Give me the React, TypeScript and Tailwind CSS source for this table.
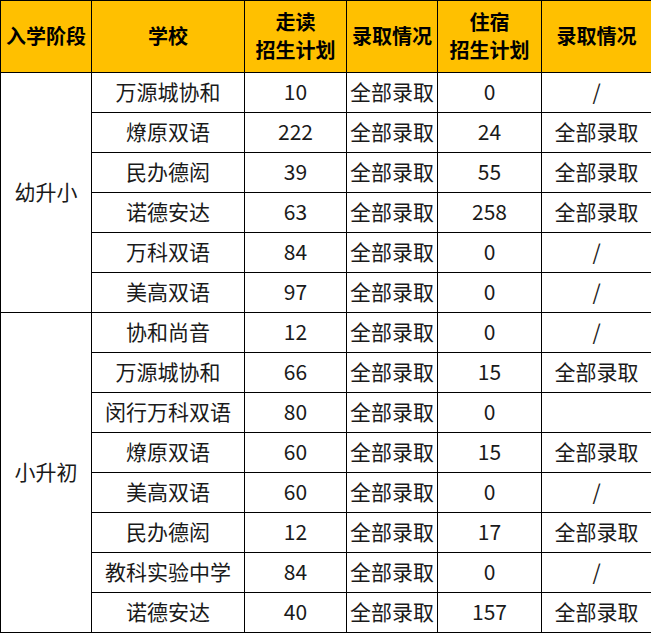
import React from 'react'

type Row = { school: string; walk: string; walkRes: string; board: string; boardRes: string }

const groups: { stage: string; rows: Row[] }[] = [
  {
    stage: '幼升小',
    rows: [
      { school: '万源城协和', walk: '10', walkRes: '全部录取', board: '0', boardRes: '/' },
      { school: '燎原双语', walk: '222', walkRes: '全部录取', board: '24', boardRes: '全部录取' },
      { school: '民办德闳', walk: '39', walkRes: '全部录取', board: '55', boardRes: '全部录取' },
      { school: '诺德安达', walk: '63', walkRes: '全部录取', board: '258', boardRes: '全部录取' },
      { school: '万科双语', walk: '84', walkRes: '全部录取', board: '0', boardRes: '/' },
      { school: '美高双语', walk: '97', walkRes: '全部录取', board: '0', boardRes: '/' },
    ],
  },
  {
    stage: '小升初',
    rows: [
      { school: '协和尚音', walk: '12', walkRes: '全部录取', board: '0', boardRes: '/' },
      { school: '万源城协和', walk: '66', walkRes: '全部录取', board: '15', boardRes: '全部录取' },
      { school: '闵行万科双语', walk: '80', walkRes: '全部录取', board: '0', boardRes: '' },
      { school: '燎原双语', walk: '60', walkRes: '全部录取', board: '15', boardRes: '全部录取' },
      { school: '美高双语', walk: '60', walkRes: '全部录取', board: '0', boardRes: '/' },
      { school: '民办德闳', walk: '12', walkRes: '全部录取', board: '17', boardRes: '全部录取' },
      { school: '教科实验中学', walk: '84', walkRes: '全部录取', board: '0', boardRes: '/' },
      { school: '诺德安达', walk: '40', walkRes: '全部录取', board: '157', boardRes: '全部录取' },
    ],
  },
]

const th = 'border border-black bg-[#ffc000] font-bold text-black text-center align-middle p-0 pb-[2px] text-[20px] leading-[28px]'
const td = 'border border-black text-center align-middle p-0 pb-[3px] text-[21px] leading-[28px] text-[#1a1a1a] whitespace-nowrap'

export default function App() {
  return (
    <div className="bg-white w-[651px] h-[633px]" style={{ fontFamily: '"Noto Sans CJK SC", "Noto Sans", sans-serif' }}>
      <table className="border-collapse table-fixed w-[651px]">
        <colgroup>
          <col className="w-[91px]" />
          <col className="w-[153px]" />
          <col className="w-[102px]" />
          <col className="w-[91px]" />
          <col className="w-[104px]" />
          <col className="w-[110px]" />
        </colgroup>
        <thead>
          <tr className="h-[72px]">
            <th className={th}>入学阶段</th>
            <th className={th}>学校</th>
            <th className={th}>走读<br />招生计划</th>
            <th className={th}>录取情况</th>
            <th className={th}>住宿<br />招生计划</th>
            <th className={th}>录取情况</th>
          </tr>
        </thead>
        <tbody>
          {groups.map((g) =>
            g.rows.map((r, i) => (
              <tr key={g.stage + i} className="h-[40px]">
                {i === 0 && (
                  <td rowSpan={g.rows.length} className={td}>{g.stage}</td>
                )}
                <td className={td}>{r.school}</td>
                <td className={td}>{r.walk}</td>
                <td className={td}>{r.walkRes}</td>
                <td className={td}>{r.board}</td>
                <td className={td}>{r.boardRes}</td>
              </tr>
            ))
          )}
        </tbody>
      </table>
    </div>
  )
}
